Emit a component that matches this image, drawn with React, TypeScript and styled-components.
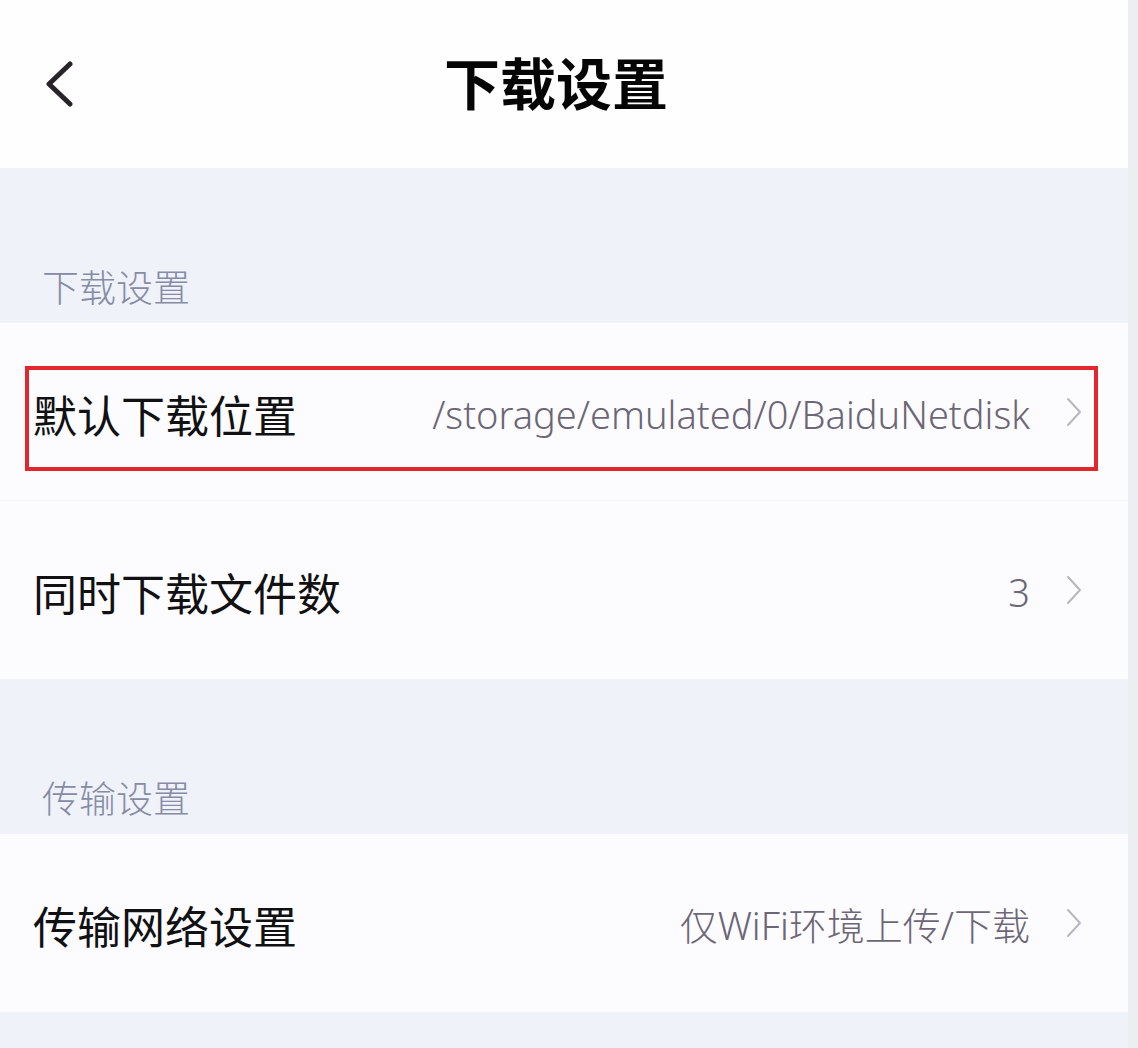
import React from "react";
import styled, { createGlobalStyle } from "styled-components";

const GlobalStyle = createGlobalStyle`
  html, body {
    margin: 0;
    padding: 0;
    background: #eceef2;
  }
  body {
    font-family: "Noto Sans", "Noto Sans CJK SC", sans-serif;
    -webkit-font-smoothing: antialiased;
  }
`;

const Page = styled.div`
  width: 1128px;
  min-height: 1048px;
  background: #eff2f8;
  display: flex;
  flex-direction: column;
`;

const Header = styled.header`
  height: 168px;
  background: #fefefe;
  display: grid;
  grid-template-columns: 1fr auto 1fr;
  align-items: center;
  padding: 0 16px 6px 0;
  box-sizing: border-box;
`;

const BackButton = styled.button`
  justify-self: start;
  margin-left: 45px;
  margin-top: 6px;
  border: 0;
  background: none;
  padding: 0;
  width: 30px;
  height: 46px;
  display: flex;
  align-items: center;
  cursor: pointer;
`;

const Title = styled.h1`
  margin: 0;
  font-family: "Noto Sans CJK SC", sans-serif;
  font-weight: 700;
  font-size: 56px;
  line-height: 1;
  color: #050505;
  letter-spacing: 0;
`;

const SectionHead = styled.div`
  height: 155px;
  box-sizing: border-box;
  display: flex;
  align-items: flex-end;
  padding: 0 0 17px 42px;
`;

const SectionLabel = styled.span`
  font-family: "Noto Sans CJK SC", sans-serif;
  font-weight: 300;
  font-size: 37px;
  line-height: 40px;
  color: #878ca6;
`;

const Card = styled.div`
  position: relative;
  background: #fcfcfe;
  display: flex;
  flex-direction: column;
`;

const Row = styled.div<{ $divider?: boolean }>`
  height: 178px;
  box-sizing: border-box;
  display: flex;
  align-items: center;
  padding: 0 46px 0 33px;
  border-bottom: ${(p) => (p.$divider ? "1px solid #f5f6f9" : "none")};
`;

const Label = styled.span`
  font-family: "Noto Sans CJK SC", sans-serif;
  font-weight: 400;
  font-size: 44px;
  line-height: 1;
  color: #111114;
  flex: 1;
  padding-top: 4px;
`;

const Value = styled.span`
  font-family: "Noto Sans", "Noto Sans CJK SC", sans-serif;
  font-weight: 300;
  font-size: 38px;
  line-height: 1;
  color: #6c6676;
  margin-right: 36px;
  padding-top: 4px;
`;

const Highlight = styled.div`
  position: absolute;
  left: 25px;
  top: 43px;
  width: 1073px;
  height: 105px;
  box-sizing: border-box;
  border: 4px solid #e1262c;
  pointer-events: none;
`;

const BottomGap = styled.div`
  flex: 1;
`;

const Chevron = () => (
  <svg width="16" height="30" viewBox="0 0 16 30" fill="none">
    <path d="M2 2 L14 15 L2 28" stroke="#b7b7bf" strokeWidth="2" strokeLinecap="round" strokeLinejoin="round" />
  </svg>
);

const BackIcon = () => (
  <svg width="30" height="46" viewBox="0 0 30 46" fill="none">
    <path d="M25 3 L4 23 L25 43" stroke="#272329" strokeWidth="5" strokeLinecap="round" strokeLinejoin="round" />
  </svg>
);

type Item = { label: string; value: string };

const SettingRow = ({ label, value, divider }: Item & { divider?: boolean }) => (
  <Row $divider={divider}>
    <Label>{label}</Label>
    <Value>{value}</Value>
    <Chevron />
  </Row>
);

export default function App() {
  return (
    <>
      <GlobalStyle />
      <Page>
        <Header>
          <BackButton aria-label="返回">
            <BackIcon />
          </BackButton>
          <Title>下载设置</Title>
          <span />
        </Header>

        <SectionHead>
          <SectionLabel>下载设置</SectionLabel>
        </SectionHead>
        <Card>
          <SettingRow label="默认下载位置" value="/storage/emulated/0/BaiduNetdisk" divider />
          <SettingRow label="同时下载文件数" value="3" />
          <Highlight />
        </Card>

        <SectionHead>
          <SectionLabel>传输设置</SectionLabel>
        </SectionHead>
        <Card>
          <SettingRow label="传输网络设置" value="仅WiFi环境上传/下载" />
        </Card>
        <BottomGap />
      </Page>
    </>
  );
}
